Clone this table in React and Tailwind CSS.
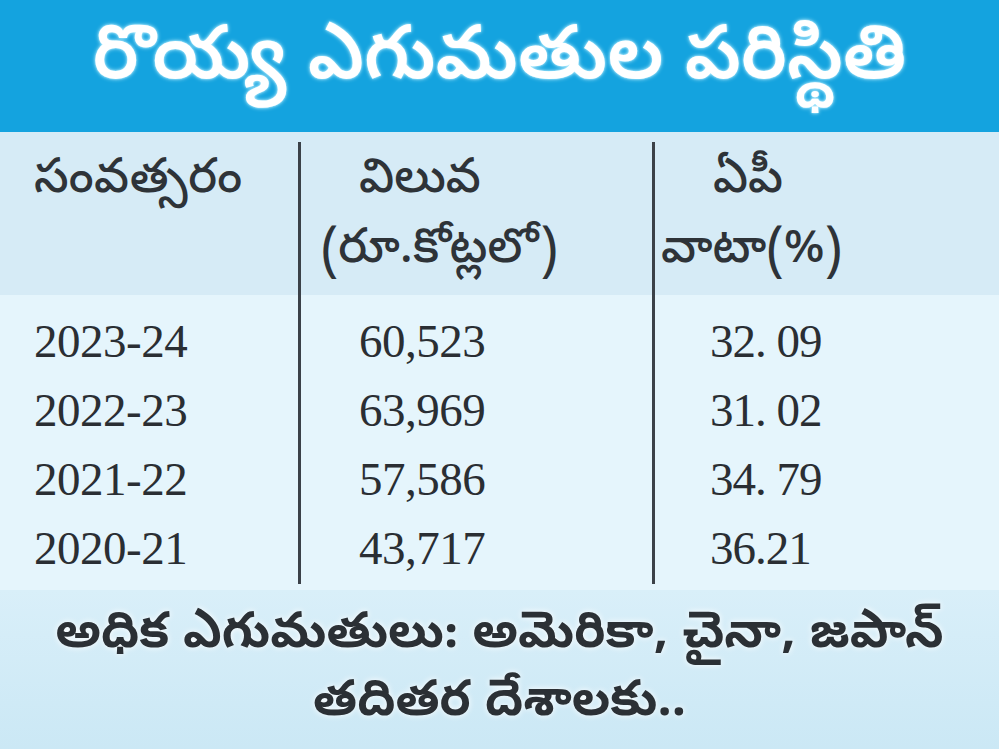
const rows = [
  { year: '2023-24', value: '60,523', share: '32. 09' },
  { year: '2022-23', value: '63,969', share: '31. 02' },
  { year: '2021-22', value: '57,586', share: '34. 79' },
  { year: '2020-21', value: '43,717', share: '36.21' },
];

const telugu = "font-['Noto_Sans_Telugu','Noto_Sans','DejaVu_Sans',sans-serif]";
const serif = "font-['Liberation_Serif',serif]";

const App = () => (
  <div className="w-[999px] h-[749px] overflow-hidden flex flex-col bg-[#e4f4fb]">
    {/* Title bar */}
    <div className="h-[132px] shrink-0 bg-[#14a3df] flex items-center justify-center">
      <h1 className={`${telugu} text-[75px] font-semibold text-white leading-none pb-[6px] [text-shadow:0_0_4px_#bff0ff,0_0_2px_#9fe6ff]`}>
        రొయ్య ఎగుమతుల పరిస్థితి
      </h1>
    </div>

    {/* Column headers */}
    <div className={`${telugu} flex h-[163px] shrink-0 pt-[10px] bg-[#d6ebf6] text-[48px] font-medium leading-[70px] text-[#2e3338]`}>
      <div className="w-[298px] pl-[34px] pt-[6px] tracking-[0.5px]">సంవత్సరం</div>
      <div className="w-[354px] border-l-[3px] border-[#3b4148] pt-[6px]">
        <p className="pl-[58px]">విలువ</p>
        <p className="pl-[20px]">(రూ.కోట్లలో)</p>
      </div>
      <div className="flex-1 border-l-[3px] border-[#3b4148] pt-[6px]">
        <p className="pl-[58px]">ఏపీ</p>
        <p className="pl-[6px]">వాటా(%)</p>
      </div>
    </div>

    {/* Data rows */}
    <div className={`${serif} flex h-[295px] shrink-0 pb-[6px] bg-[#e5f5fc] text-[47px] leading-[69px] text-[#2a2e33] tracking-[-0.5px]`}>
      <div className="w-[298px] pl-[34px] pt-[12px]">
        {rows.map((r) => <p key={r.year}>{r.year}</p>)}
      </div>
      <div className="w-[354px] border-l-[3px] border-[#3b4148] pl-[58px] pt-[12px]">
        {rows.map((r) => <p key={r.year}>{r.value}</p>)}
      </div>
      <div className="flex-1 border-l-[3px] border-[#3b4148] pl-[55px] pt-[12px] tracking-[-1px]">
        {rows.map((r) => <p key={r.year}>{r.share}</p>)}
      </div>
    </div>

    {/* Footer note */}
    <div className={`${telugu} flex-1 bg-gradient-to-b from-[#d9eff9] to-[#cbe8f5] flex flex-col items-center justify-center pt-[4px] text-[50px] leading-[68px] font-bold text-[#2b3035] [text-shadow:0_0_6px_#ffffff]`}>
      <p>అధిక ఎగుమతులు: అమెరికా, చైనా, జపాన్</p>
      <p>తదితర దేశాలకు..</p>
    </div>
  </div>
);

export default App;
